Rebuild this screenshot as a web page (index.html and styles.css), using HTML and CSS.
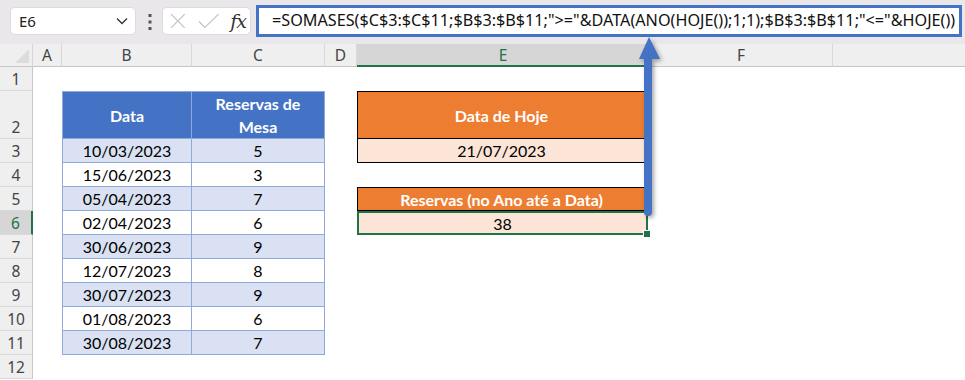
FILE: index.html
```html
<!DOCTYPE html>
<html lang="pt">
<head>
    <meta charset="UTF-8">
    <title>SOMASES - Reservas no Ano</title>
    <link rel="stylesheet" href="styles.css">
</head>
<body>
<div class="topbar">
    <div class="namebox">
        <span>E6</span>
        <svg width="12" height="8" viewBox="0 0 12 8"><path d="M1 1.5 L6 6.5 L11 1.5" fill="none" stroke="#333" stroke-width="1.3"/></svg>
    </div>
    <svg class="dots" width="4" height="16" viewBox="0 0 4 16">
        <rect x="0.5" y="0" width="3" height="3" fill="#555"/>
        <rect x="0.5" y="6.5" width="3" height="3" fill="#555"/>
        <rect x="0.5" y="13" width="3" height="3" fill="#555"/>
    </svg>
    <div class="fxbox">
        <svg width="16" height="16" viewBox="0 0 16 16"><path d="M1 1 L15 15 M15 1 L1 15" stroke="#c4c4c4" stroke-width="1.3"/></svg>
        <svg width="22" height="16" viewBox="0 0 22 16"><path d="M1 8.5 L7 14.5 L21 1" fill="none" stroke="#c4c4c4" stroke-width="1.3"/></svg>
        <span class="fx">fx</span>
    </div>
    <div class="formula">=SOMASES($C$3:$C$11;$B$3:$B$11;"&gt;="&amp;DATA(ANO(HOJE());1;1);$B$3:$B$11;"&lt;="&amp;HOJE())</div>
</div>

<div class="sheet">
    <div class="corner"></div>
    <div class="colhead">A</div>
    <div class="colhead">B</div>
    <div class="colhead">C</div>
    <div class="colhead">D</div>
    <div class="colhead active">E</div>
    <div class="colhead">F</div>
    <div class="colhead last"></div>

    <div class="rowhead">1</div>
    <div class="rowhead">2</div>
    <div class="rowhead">3</div>
    <div class="rowhead">4</div>
    <div class="rowhead">5</div>
    <div class="rowhead active">6</div>
    <div class="rowhead">7</div>
    <div class="rowhead">8</div>
    <div class="rowhead">9</div>
    <div class="rowhead">10</div>
    <div class="rowhead">11</div>
    <div class="rowhead">12</div>

    <div class="data">
        <div class="th">Data</div>
        <div class="th">Reservas de<br>Mesa</div>
        <div class="td band">10/03/2023</div><div class="td band">5</div>
        <div class="td">15/06/2023</div><div class="td">3</div>
        <div class="td band">05/04/2023</div><div class="td band">7</div>
        <div class="td">02/04/2023</div><div class="td">6</div>
        <div class="td band">30/06/2023</div><div class="td band">9</div>
        <div class="td">12/07/2023</div><div class="td">8</div>
        <div class="td band">30/07/2023</div><div class="td band">9</div>
        <div class="td">01/08/2023</div><div class="td">6</div>
        <div class="td band">30/08/2023</div><div class="td band">7</div>
    </div>

    <div class="results">
        <div class="label tall">Data de Hoje</div>
        <div class="value">21/07/2023</div>
        <div class="spacer"></div>
        <div class="label">Reservas (no Ano até a Data)</div>
        <div class="value selected">38<span class="handle"></span></div>
    </div>
</div>

<svg class="arrow" width="40" height="190" viewBox="630 30 40 190">
    <line x1="648" y1="55" x2="648" y2="212" stroke="#4472c4" stroke-width="8" stroke-linecap="round"/>
    <polygon points="649,37 639,59 660,59" fill="#4472c4"/>
</svg>
</body>
</html>
```

FILE: styles.css
```css
body {
    margin: 0;
    width: 965px;
    height: 380px;
    overflow: hidden;
    background: #fff;
    position: relative;
    font-family: Lato, "Liberation Sans", sans-serif;
}

/* formula bar */
.topbar {
    height: 44px;
    background: #e9e7ea;
    display: flex;
    align-items: flex-start;
    padding-left: 10px;
    box-sizing: border-box;
}

.namebox {
    margin-top: 7px;
    width: 126px;
    height: 28px;
    box-sizing: border-box;
    background: #fff;
    border: 1px solid #dedbde;
    border-radius: 5px;
    display: flex;
    align-items: center;
    justify-content: space-between;
    padding: 0 7px 0 8px;
    font-family: "Noto Sans", sans-serif;
    font-size: 15px;
    color: #222;
}

.dots {
    margin: 14px 10px 0 12px;
}

.fxbox {
    margin-top: 7px;
    width: 89px;
    height: 28px;
    box-sizing: border-box;
    background: #fff;
    border: 1px solid #dedbde;
    border-radius: 5px;
    display: flex;
    align-items: center;
    padding: 0 4px 0 7px;
    gap: 12px;
}

.fx {
    font-family: "DejaVu Serif", serif;
    font-style: italic;
    font-size: 19px;
    color: #333;
    margin-left: -1px;
    letter-spacing: -1px;
}

.formula {
    margin: 5px 0 0 5px;
    width: 706px;
    height: 32px;
    box-sizing: border-box;
    border: 3px solid #4472c4;
    background: #fff;
    padding-left: 13px;
    font-family: "Noto Sans", sans-serif;
    font-size: 16.2px;
    line-height: 25px;
    color: #111;
    white-space: nowrap;
    overflow: hidden;
}

/* sheet grid */
.sheet {
    display: grid;
    grid-template-columns: 33px 29px 130px 133px 32px 293px 183px 1fr;
    grid-template-rows: 23px 24px 48px repeat(10, 24px);
}

.corner {
    background: #efefef;
    border-right: 1px solid #d6d6d6;
    border-bottom: 1px solid #c6c6c6;
    position: relative;
}

.corner::after {
    content: "";
    position: absolute;
    right: 3px;
    bottom: 3px;
    border-style: solid;
    border-width: 0 0 14px 14px;
    border-color: transparent transparent #dcdcdc transparent;
}

.colhead {
    background: #efefef;
    border-right: 1px solid #d8d8d8;
    border-bottom: 1px solid #c6c6c6;
    font-family: "Noto Sans", sans-serif;
    font-size: 15.5px;
    color: #444;
    display: flex;
    align-items: center;
    justify-content: center;
}

.colhead.active {
    background: #d6d6d6;
    color: #217346;
    border-bottom: 2px solid #217346;
}

.colhead.last {
    border-right: none;
}

.rowhead {
    grid-column: 1;
    background: #efefef;
    border-right: 1px solid #c6c6c6;
    border-bottom: 1px solid #dadada;
    font-family: "Noto Sans", sans-serif;
    font-size: 15.5px;
    color: #444;
    display: flex;
    align-items: flex-end;
    justify-content: center;
    line-height: 22px;
}

.rowhead.active {
    background: #d6d6d6;
    color: #217346;
    border-right: 2px solid #217346;
}

/* table B2:C11 */
.data {
    grid-column: 3 / 5;
    grid-row: 3 / 13;
    display: grid;
    grid-template-columns: 130px 133px;
    grid-template-rows: 48px repeat(9, 24px);
    font-size: 16px;
    color: #000;
}

.th, .td {
    border-right: 1px solid #8eaadb;
    border-bottom: 1px solid #8eaadb;
    display: flex;
    align-items: center;
    justify-content: center;
    text-align: center;
    box-sizing: border-box;
}

.th:first-child, .td:nth-child(odd) {
    border-left: 1px solid #8eaadb;
}

.th {
    background: #4472c4;
    color: #fff;
    font-weight: bold;
    line-height: 23px;
    border-top: 1px solid #8eaadb;
}

.td.band {
    background: #d9e1f2;
}

/* results E2:E6 */
.results {
    grid-column: 6 / 7;
    grid-row: 3 / 8;
    display: flex;
    flex-direction: column;
    margin-right: 4px;
    font-size: 16px;
}

.label, .value {
    height: 24px;
    box-sizing: border-box;
    border: 1px solid #000;
    display: flex;
    align-items: center;
    justify-content: center;
}

.label {
    background: #ed7d31;
    color: #fff;
    font-weight: bold;
}

.label.tall {
    height: 48px;
}

.value {
    background: #fce4d6;
    border-top: none;
}

.spacer {
    height: 24px;
}

.value.selected {
    border: 2px solid #217346;
    position: relative;
    margin-right: -2px;
}

.handle {
    position: absolute;
    right: -5px;
    bottom: -5px;
    width: 6px;
    height: 6px;
    background: #217346;
    border: 1px solid #fff;
}

.arrow {
    position: absolute;
    left: 630px;
    top: 30px;
    filter: drop-shadow(2px 2px 2px rgba(0, 0, 0, 0.35));
}
```
